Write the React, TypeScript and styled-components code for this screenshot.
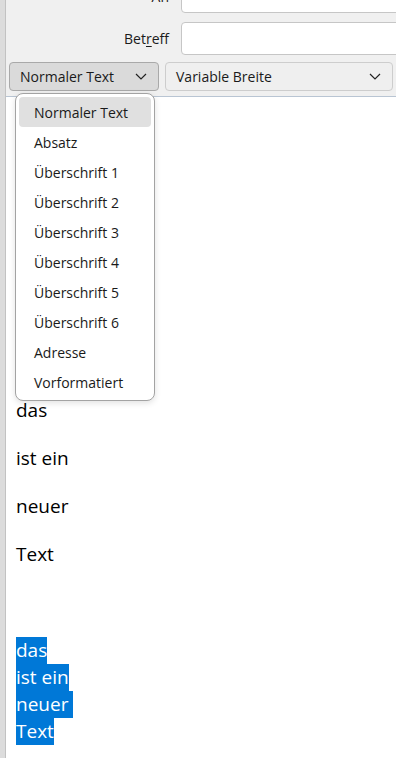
import styled, { createGlobalStyle } from "styled-components";

const GlobalStyle = createGlobalStyle`
  html, body {
    margin: 0;
    padding: 0;
    background: #ffffff;
    overflow: hidden;
  }
  body {
    font-family: "Open Sans", "Noto Sans", sans-serif;
  }
`;

const Window = styled.div`
  display: flex;
  width: 396px;
  height: 758px;
  overflow: hidden;
`;

const Strip = styled.div`
  width: 5px;
  flex: none;
  background: #dcdcdc;
  border-right: 1px solid #c2c2c2;
`;

const Main = styled.div`
  flex: 1;
  min-width: 0;
  display: flex;
  flex-direction: column;
  overflow: hidden;
`;

const Header = styled.div`
  background: #f0f0f0;
  padding: 0 3px 5px 3px;
  border-bottom: 1px solid #b9c5d3;
  display: flex;
  flex-direction: column;
  gap: 9px;
`;

const FieldRow = styled.div<{ $first?: boolean }>`
  display: grid;
  grid-template-columns: 160px 1fr;
  column-gap: 12px;
  align-items: center;
  margin-top: ${(p) => (p.$first ? "-20px" : "0")};
  margin-right: -12px;
`;

const Label = styled.label`
  text-align: right;
  font-size: 14px;
  color: #1b1b1b;
  u {
    text-decoration-thickness: 1px;
    text-underline-offset: 2px;
  }
`;

const Field = styled.div`
  height: 31px;
  background: #ffffff;
  border: 1px solid #c6c6c6;
  border-radius: 4px;
`;

const Toolbar = styled.div`
  display: flex;
  gap: 6px;
  margin-top: -2px;
`;

const Select = styled.div<{ $pressed?: boolean; $grow?: boolean }>`
  box-sizing: border-box;
  height: 29px;
  width: ${(p) => (p.$grow ? "auto" : "150px")};
  flex: ${(p) => (p.$grow ? "1" : "none")};
  display: flex;
  align-items: center;
  justify-content: space-between;
  padding: 0 11px 0 10px;
  font-size: 14px;
  color: #1a1a1a;
  background: ${(p) => (p.$pressed ? "#dadada" : "#efefef")};
  border: 1px solid ${(p) => (p.$pressed ? "#a9a9a9" : "#cdcdcd")};
  border-radius: 4px;
`;

const Editor = styled.div`
  position: relative;
  flex: 1;
  background: #ffffff;
  padding: 300px 0 0 10px;
`;

const Para = styled.p`
  margin: 0 0 21px;
  font-size: 19px;
  line-height: 27px;
  color: #000000;
  min-height: 27px;
`;

const Selected = styled.div`
  font-size: 19px;
  line-height: 27px;
`;

const SelLine = styled.span`
  display: block;
  width: fit-content;
  white-space: pre;
  background: #0078d7;
  color: #ffffff;
`;

const Menu = styled.div`
  position: absolute;
  top: -4px;
  left: 9px;
  width: 140px;
  box-sizing: border-box;
  padding: 3px;
  background: #ffffff;
  border: 1px solid #a3a3a3;
  border-radius: 8px;
  box-shadow: 0 2px 6px rgba(0, 0, 0, 0.12);
`;

const Item = styled.div<{ $active?: boolean }>`
  height: 30px;
  display: flex;
  align-items: center;
  padding-left: 15px;
  font-size: 14px;
  color: #1a1a1a;
  border-radius: 4px;
  background: ${(p) => (p.$active ? "#e0e0e0" : "transparent")};
`;

const Chevron = () => (
  <svg width="12" height="7" viewBox="0 0 12 7" fill="none">
    <path d="M1 1 L6 6 L11 1" stroke="#222" strokeWidth="1.2" />
  </svg>
);

const styles = [
  "Normaler Text",
  "Absatz",
  "Überschrift 1",
  "Überschrift 2",
  "Überschrift 3",
  "Überschrift 4",
  "Überschrift 5",
  "Überschrift 6",
  "Adresse",
  "Vorformatiert",
];

export default function App() {
  return (
    <>
      <GlobalStyle />
      <Window>
        <Strip />
        <Main>
          <Header>
            <FieldRow $first>
              <Label>An</Label>
              <Field />
            </FieldRow>
            <FieldRow>
              <Label>
                Bet<u>r</u>eff
              </Label>
              <Field />
            </FieldRow>
            <Toolbar>
              <Select $pressed>
                Normaler Text
                <Chevron />
              </Select>
              <Select $grow>
                Variable Breite
                <Chevron />
              </Select>
            </Toolbar>
          </Header>
          <Editor>
            <Para>das</Para>
            <Para>ist ein</Para>
            <Para>neuer</Para>
            <Para>Text</Para>
            <Para />
            <Selected>
              <SelLine>das</SelLine>
              <SelLine>ist ein</SelLine>
              <SelLine>neuer </SelLine>
              <SelLine>Text</SelLine>
            </Selected>
            <Menu>
              {styles.map((s, i) => (
                <Item key={s} $active={i === 0}>
                  {s}
                </Item>
              ))}
            </Menu>
          </Editor>
        </Main>
      </Window>
    </>
  );
}
